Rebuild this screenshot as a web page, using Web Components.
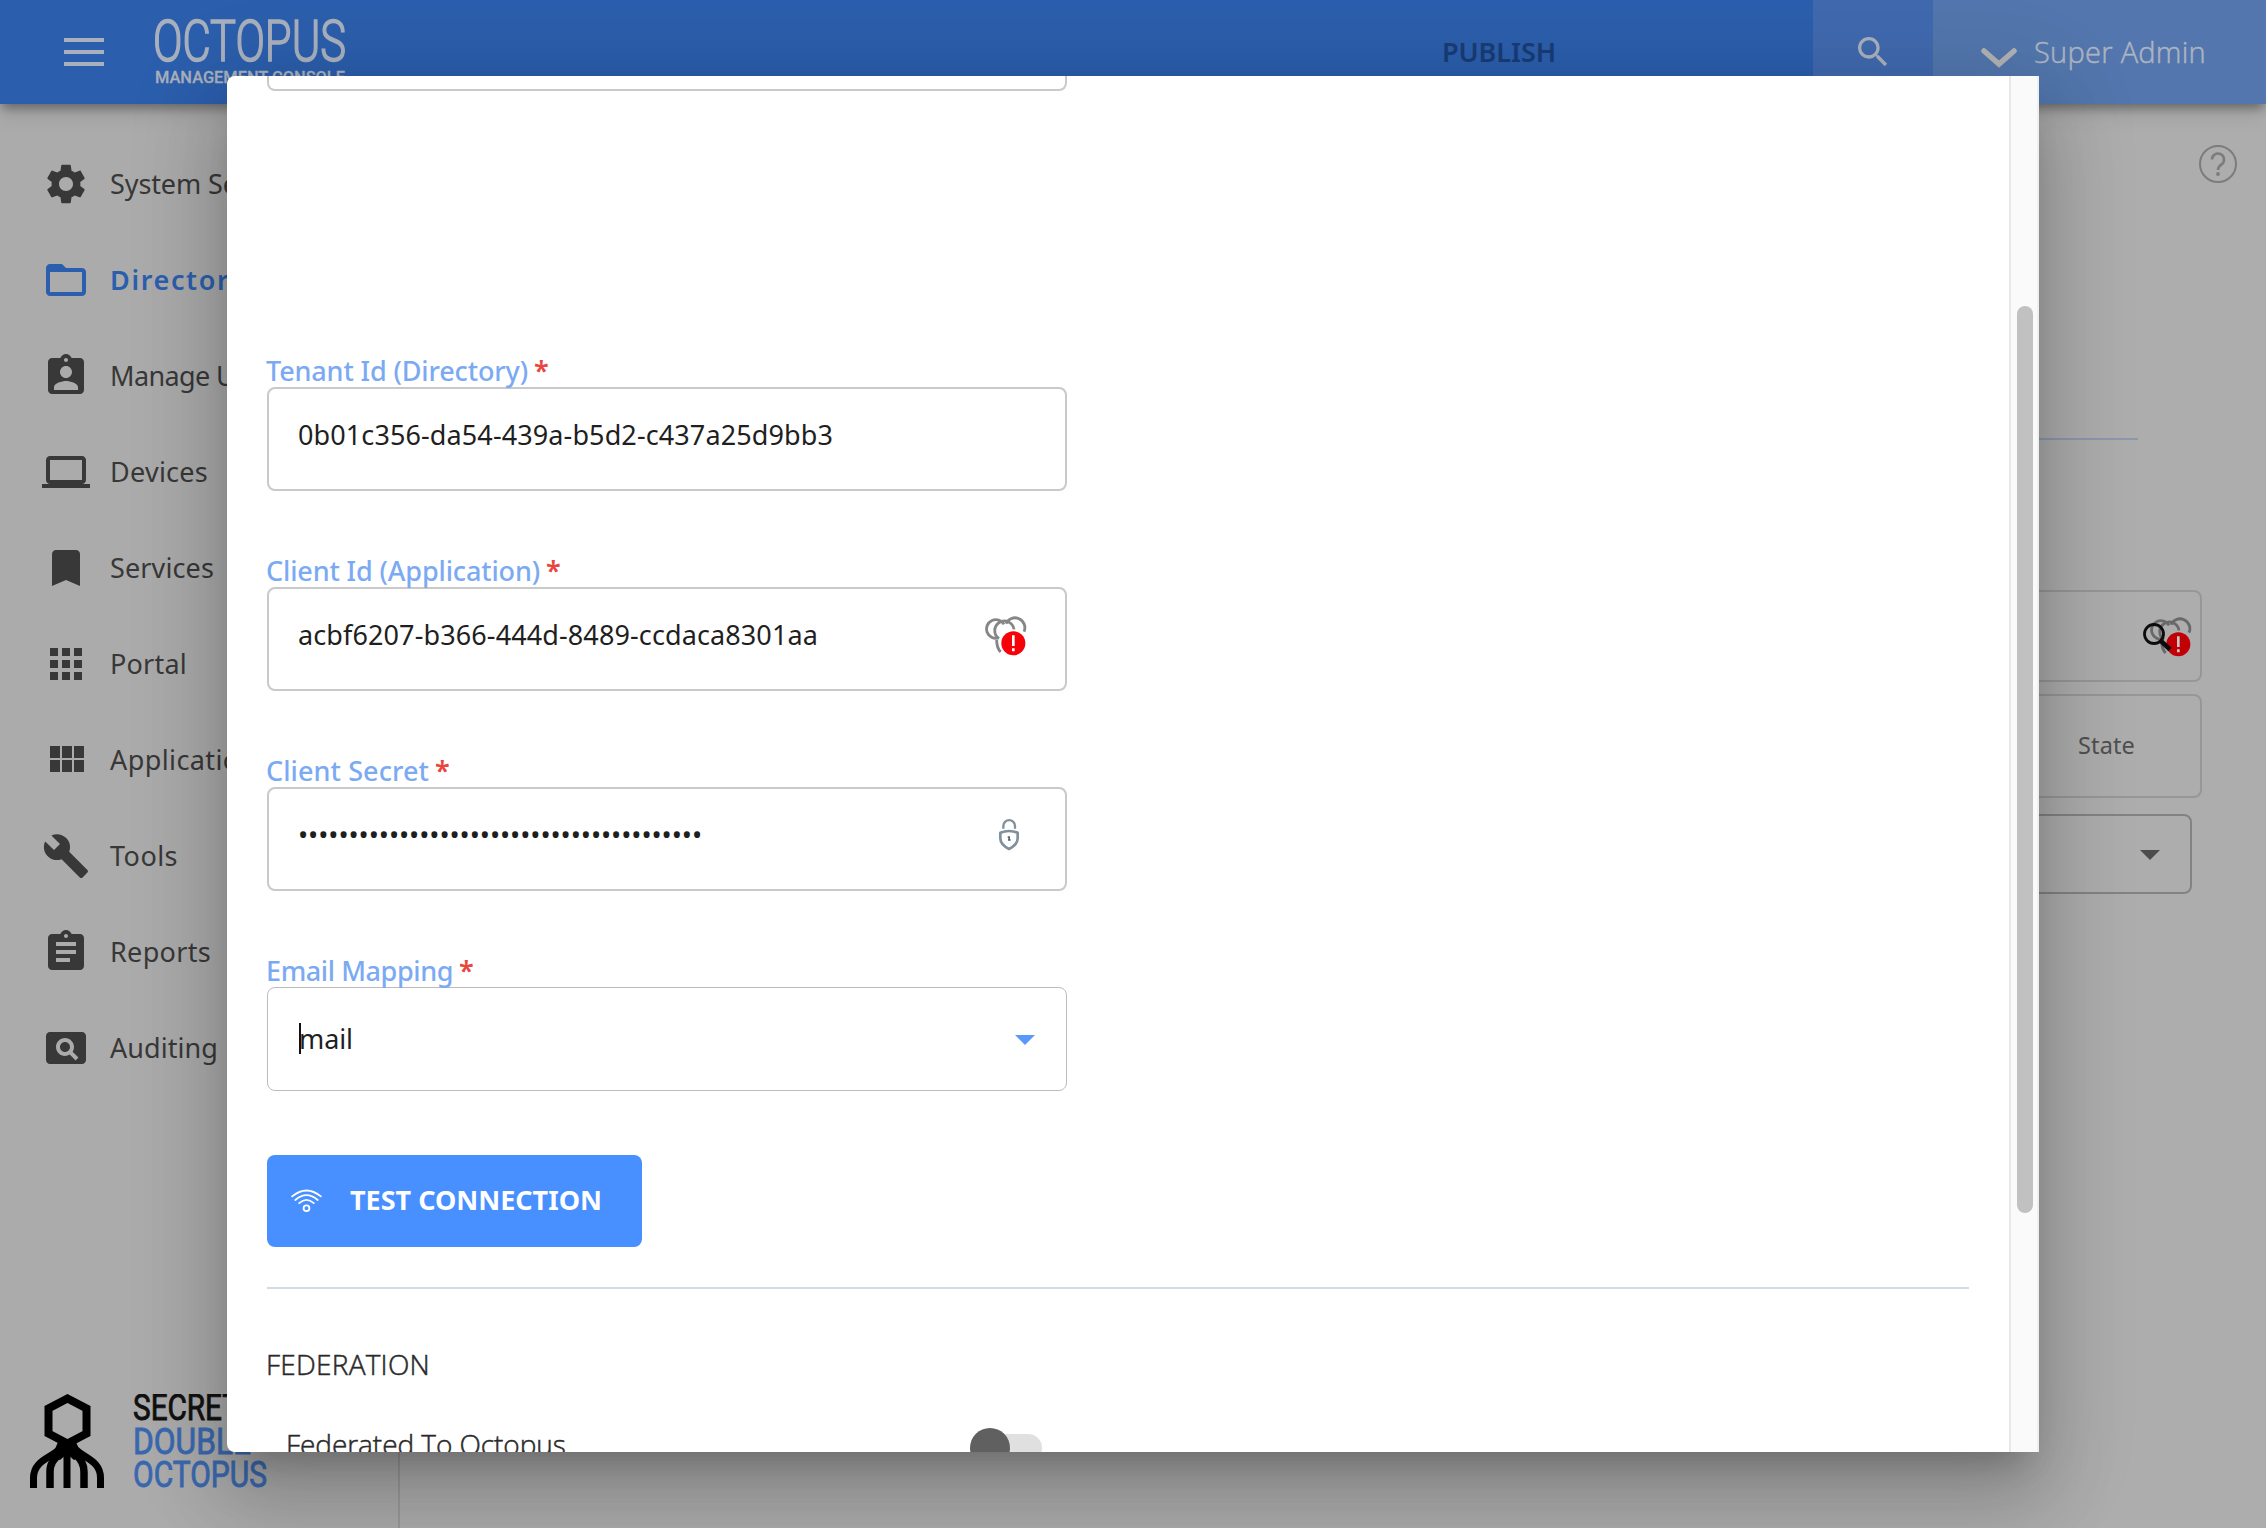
<!DOCTYPE html>
<html lang="en">
<head>
    <meta charset="UTF-8">
    <meta name="viewport" content="width=device-width, initial-scale=1.0">
    <title>Octopus Management Console</title>
    <style>
        html, body {
            margin: 0;
            height: 100%;
            overflow: hidden;
            font-family: "Noto Sans", "Open Sans", sans-serif;
            font-size: 27px;
        }
    </style>
</head>
<body>
    <octo-console>
        <octo-header slot="header"></octo-header>
        <octo-sidebar slot="sidebar">
            <nav-item icon="settings" w="200">System Settings</nav-item>
            <nav-item icon="folder" w="162" active>Directories</nav-item>
            <nav-item icon="badge" w="175">Manage Users</nav-item>
            <nav-item icon="laptop" w="98">Devices</nav-item>
            <nav-item icon="bookmark" w="104">Services</nav-item>
            <nav-item icon="apps" w="77">Portal</nav-item>
            <nav-item icon="module" w="160">Applications</nav-item>
            <nav-item icon="build" w="68">Tools</nav-item>
            <nav-item icon="report" w="101">Reports</nav-item>
            <nav-item icon="pageview" w="108">Auditing</nav-item>
        </octo-sidebar>
        <directory-page slot="main"></directory-page>
        <modal-dialog slot="dialog">
            <form-field label="Tenant Id (Directory)" lw="262">
                <fit-text w="535">0b01c356-da54-439a-b5d2-c437a25d9bb3</fit-text>
            </form-field>
            <form-field label="Client Id (Application)" lw="274">
                <fit-text w="520">acbf6207-b366-444d-8489-ccdaca8301aa</fit-text>
                <octo-icon slot="suffix" name="cluster" style="margin: 2px 38px 0 0"></octo-icon>
            </form-field>
            <form-field label="Client Secret" lw="163">
                <fit-text w="404">••••••••••••••••••••••••••••••••••••••••</fit-text>
                <octo-icon slot="suffix" name="lock" style="margin: -2px 45px 0 0"></octo-icon>
            </form-field>
            <form-field label="Email Mapping" lw="187" select>
                <fit-text w="54">mail</fit-text>
                <octo-icon slot="suffix" name="caret" style="margin-right: 31px; color: #5a98fa"></octo-icon>
            </form-field>
            <action-button slot="actions" w="252">TEST CONNECTION</action-button>
            <toggle-row slot="federation" w="277">Federated To Octopus</toggle-row>
        </modal-dialog>
    </octo-console>

    <script>
    // name: [width, height, viewBox, markup]
    const ICONS = {
        settings: [48, 48, '0 0 24 24', '<path d="M19.14 12.94c.04-.3.06-.61.06-.94 0-.32-.02-.64-.07-.94l2.03-1.58c.18-.14.23-.41.12-.61l-1.92-3.32c-.12-.22-.37-.29-.59-.22l-2.39.96c-.5-.38-1.03-.7-1.62-.94L14.4 2.81c-.04-.24-.24-.41-.48-.41h-3.84c-.24 0-.43.17-.47.41l-.36 2.54c-.59.24-1.13.57-1.62.94l-2.39-.96c-.22-.08-.47 0-.59.22L2.74 8.87c-.12.21-.08.47.12.61l2.03 1.58c-.05.3-.09.63-.09.94s.02.64.07.94l-2.03 1.58c-.18.14-.23.41-.12.61l1.92 3.32c.12.22.37.29.59.22l2.39-.96c.5.38 1.03.7 1.62.94l.36 2.54c.05.24.24.41.48.41h3.84c.24 0 .44-.17.47-.41l.36-2.54c.59-.24 1.13-.56 1.62-.94l2.39.96c.22.08.47 0 .59-.22l1.92-3.32c.12-.22.07-.47-.12-.61l-2.01-1.58zM12 15.5c-1.93 0-3.5-1.57-3.5-3.5s1.57-3.5 3.5-3.5 3.5 1.57 3.5 3.5-1.57 3.5-3.5 3.5z"/>'],
        folder: [48, 48, '0 0 24 24', '<path d="M20 6h-8l-2-2H4c-1.1 0-1.99.9-1.99 2L2 18c0 1.1.9 2 2 2h16c1.1 0 2-.9 2-2V8c0-1.1-.9-2-2-2zm0 12H4V8h16v10z"/>'],
        badge: [48, 48, '0 0 24 24', '<path d="M19 3h-4.18C14.4 1.84 13.3 1 12 1c-1.3 0-2.4.84-2.82 2H5c-1.1 0-2 .9-2 2v14c0 1.1.9 2 2 2h14c1.1 0 2-.9 2-2V5c0-1.1-.9-2-2-2zm-7 0c.55 0 1 .45 1 1s-.45 1-1 1-1-.45-1-1 .45-1 1-1zm0 4c1.66 0 3 1.34 3 3s-1.34 3-3 3-3-1.34-3-3 1.34-3 3-3zm6 12H6v-1.400c0-2 4-3.100 6-3.100s6 1.100 6 3.100V19z"/>'],
        laptop: [48, 48, '0 0 24 24', '<path d="M20 18c1.1 0 1.99-.9 1.99-2L22 6c0-1.1-.9-2-2-2H4c-1.1 0-2 .9-2 2v10c0 1.1.9 2 2 2H0v2h24v-2h-4zM4 6h16v10H4V6z"/>'],
        bookmark: [48, 48, '0 0 24 24', '<path d="M17 3H7c-1.1 0-1.99.9-1.99 2L5 21l7-3 7 3V5c0-1.1-.9-2-2-2z"/>'],
        apps: [48, 48, '0 0 24 24', '<path d="M4 8h4V4H4v4zm6 12h4v-4h-4v4zm-6 0h4v-4H4v4zm0-6h4v-4H4v4zm6 0h4v-4h-4v4zm6-10v4h4V4h-4zm-6 4h4V4h-4v4zm6 6h4v-4h-4v4zm0 6h4v-4h-4v4z"/>'],
        module: [48, 48, '0 0 24 24', '<path d="M4 11h5V5H4v6zm0 7h5v-6H4v6zm6 0h5v-6h-5v6zm6 0h5v-6h-5v6zm-6-7h5V5h-5v6zm6-6v6h5V5h-5z"/>'],
        build: [48, 48, '0 0 24 24', '<path d="M22.7 19l-9.1-9.1c.9-2.3.4-5-1.5-6.9-2-2-5-2.4-7.4-1.3L9 6 6 9 1.6 4.7C.4 7.1.9 10.1 2.9 12.1c1.9 1.9 4.6 2.4 6.9 1.5l9.1 9.1c.4.4 1 .4 1.4 0l2.3-2.3c.5-.4.5-1.1.1-1.4z"/>'],
        report: [48, 48, '0 0 24 24', '<path d="M19 3h-4.18C14.4 1.84 13.3 1 12 1c-1.3 0-2.4.84-2.82 2H5c-1.1 0-2 .9-2 2v14c0 1.1.9 2 2 2h14c1.1 0 2-.9 2-2V5c0-1.1-.9-2-2-2zm-7 0c.55 0 1 .45 1 1s-.45 1-1 1-1-.45-1-1 .45-1 1-1zm2 14H7v-2h7v2zm3-4H7v-2h10v2zm0-4H7V7h10v2z"/>'],
        pageview: [48, 48, '0 0 24 24', '<path d="M11.5 9C10.12 9 9 10.12 9 11.5s1.12 2.5 2.5 2.5 2.5-1.12 2.5-2.5S12.88 9 11.5 9zM20 4H4c-1.1 0-2 .9-2 2v12c0 1.1.9 2 2 2h16c1.1 0 2-.9 2-2V6c0-1.1-.9-2-2-2zm-3.21 14.21l-2.91-2.91c-.69.44-1.51.7-2.39.7C9.01 16 7 13.99 7 11.5S9.01 7 11.5 7 16 9.01 16 11.5c0 .88-.26 1.69-.7 2.39l2.91 2.9-1.42 1.42z"/>'],
        menu: [40, 28, '0 0 40 28', '<path d="M0 0h40v4H0zM0 12h40v4H0zM0 24h40v4H0z"/>'],
        search: [40, 40, '0 0 24 24', '<path d="M15.5 14h-.79l-.28-.27C15.41 12.59 16 11.11 16 9.5 16 5.91 13.09 3 9.5 3S3 5.91 3 9.5 5.91 16 9.5 16c1.61 0 3.09-.59 4.23-1.57l.27.28v.79l5 4.99L20.49 19l-4.99-5zm-6 0C7.01 14 5 11.99 5 9.5S7.01 5 9.5 5 14 7.01 14 9.5 11.99 14 9.5 14z"/>'],
        chevron: [36, 20, '0 0 36 20', '<path d="M3 3l15 13L33 3" fill="none" stroke="currentColor" stroke-width="5.5" stroke-linecap="round"/>'],
        help: [40, 40, '0 0 40 40', '<g fill="none" stroke="currentColor" stroke-width="2"><circle cx="20" cy="20" r="18"/><path d="M14 15.500a6 6 0 1 1 9.500 4.900c-2.300 1.700-3.500 2.700-3.500 5.600" stroke-width="2.600"/></g><circle cx="20" cy="30" r="1.900"/>'],
        // overlapping rings with an alert badge
        cluster: [42, 42, '134 106 126 126', '<g fill="none" stroke="#868686" stroke-width="8.500"><path d="M191 131A28 28 0 1 0 174 172"/><path d="M197 129A29 29 0 0 1 251 153"/><path d="M176 174A29 29 0 1 1 221 146"/><path d="M169 178Q169 202 181 214"/></g><circle cx="219" cy="188" r="36" fill="#f80008"/><path d="M215 164h8v32h-8zM215 203h8v9h-8z" fill="#fff"/>'],
        lock: [22, 34, '174 711 66 102', '<g fill="none" stroke="#80909c"><path d="M190 743v-8a17 17 0 0 1 35 0v8" stroke-width="7"/><path d="M181 755q26-10 52 0v17q0 19-26 32q-26-13-26-32z" stroke-width="8" stroke-linejoin="round"/></g><path d="M203 766h7v9h2v4h-8v-4h1v-5h-2z" fill="#506470"/>'],
        caret: [20, 10, '0 0 20 10', '<path d="M0 0h20L10 10z"/>'],
        wifi: [31, 24, '0 0 32 24', '<g fill="none" stroke="currentColor" stroke-width="1.900" stroke-linecap="round"><path d="M1.200 7.200Q16-5 30.800 7.200M4.500 10.900Q16 1 27.500 10.900M8.500 14.200Q16 7.500 23.500 14.200"/><circle cx="16" cy="19.500" r="3"/></g>'],
        octopus: [74, 94, '0 0 74 94', '<g fill="none" stroke="#000"><path d="M37.500 4.500L56.500 14.500v25L37.500 49.500 18.500 39.500v-25z" stroke-width="8"/><path d="M37 48v46" stroke-width="7"/><path d="M34 52C32 62 20 63 20 78v16M41 52C43 62 54 63 54 78v16" stroke-width="7.500"/><path d="M34 50C26 64 3.500 64 3.500 84v10M41 50C49 64 70.500 64 70.500 84v10" stroke-width="7"/></g><path d="M28 48h18l6 14-8 4-7-6-7 6-8-4z"/>'],
        lens: [32, 32, '0 0 32 32', '<circle cx="12" cy="12" r="9.500" fill="none" stroke="#0c0c0c" stroke-width="2.800"/><path d="M19 19l9 8.500" stroke="#0c0c0c" stroke-width="4.500"/>']
    };

    const define = (name, cls) => customElements.define(name, cls);

    class OctoIcon extends HTMLElement {
        constructor() {
            super();
            this.attachShadow({mode: 'open'});
        }
        connectedCallback() {
            const [w, h, box, body] = ICONS[this.getAttribute('name')];
            this.shadowRoot.innerHTML = `
            <style>
            :host { display: block; flex: none; }
            svg { display: block; fill: currentColor; }
            </style>
            <svg width="${w}" height="${h}" viewBox="${box}">${body}</svg>`;
        }
    }
    define('octo-icon', OctoIcon);

    // One line of text, tracked in or out until it is `w` pixels wide
    class FitText extends HTMLElement {
        constructor() {
            super();
            this.attachShadow({mode: 'open'}).innerHTML = `
            <style>
            :host { display: block; flex: none; white-space: nowrap; }
            span { display: inline-block; }
            </style>
            <span><slot></slot></span>`;
        }
        connectedCallback() {
            const span = this.shadowRoot.querySelector('span');
            const w = parseFloat(this.getAttribute('w'));
            const n = this.textContent.trim().length;
            if (!w || !n) return;
            span.style.letterSpacing = '0px';
            const natural = span.getBoundingClientRect().width;
            span.style.letterSpacing = `${(w - natural) / n}px`;
        }
    }
    define('fit-text', FitText);

    class NavItem extends HTMLElement {
        constructor() {
            super();
            this.attachShadow({mode: 'open'});
        }
        connectedCallback() {
            this.shadowRoot.innerHTML = `
            <style>
            :host { display: flex; align-items: center; gap: 20px; height: 96px; padding-left: 42px; color: #383838; }
            :host([active]) { color: #2b5fae; font-weight: 600; }
            fit-text { margin-bottom: 2px; }
            </style>
            <octo-icon name="${this.getAttribute('icon')}"></octo-icon>
            <fit-text w="${this.getAttribute('w')}">${this.textContent}</fit-text>`;
        }
    }
    define('nav-item', NavItem);

    class OctoHeader extends HTMLElement {
        constructor() {
            super();
            this.attachShadow({mode: 'open'}).innerHTML = `
            <style>
            :host {
                display: flex; height: 104px; position: relative; color: #a9b0bd;
                background: #2b5eac;
                box-shadow: 0 6px 10px -2px rgba(0,0,0,.36), 0 12px 20px 0 rgba(0,0,0,.08);
            }
            .menu { padding: 38px 50px 0 64px; }
            .brand { display: block; }
            .publish { margin-left: auto; padding: 0 257px 0 0; line-height: 103px; font-weight: 600; color: #193c75; }
            .search { width: 120px; background: #4069ae; }
            .search octo-icon { padding: 32px 0 0 40px; }
            .user { display: flex; width: 333px; background: #5276ad; color: #b0b2b4; }
            .user octo-icon { padding: 48px 17px 0 48px; }
            .user fit-text { font: 300 29px/104px "Open Sans", sans-serif; color: #adb4c2; -webkit-text-stroke: .5px #adb4c2; }
            </style>
            <octo-icon class="menu" name="menu"></octo-icon>
            <svg class="brand" width="200" height="104" fill="#a9b0bd">
                <text x="-1" y="61" font-family="Roboto, sans-serif" font-weight="300" font-size="57" stroke="#a9b0bd" stroke-width="1.600" textLength="193" lengthAdjust="spacingAndGlyphs">OCTOPUS</text>
                <text x="1" y="83" font-family="Roboto, sans-serif" font-weight="500" font-size="17" stroke="#a9b0bd" stroke-width=".3" textLength="190" lengthAdjust="spacingAndGlyphs">MANAGEMENT CONSOLE</text>
            </svg>
            <fit-text class="publish" w="114">PUBLISH</fit-text>
            <div class="search"><octo-icon name="search"></octo-icon></div>
            <div class="user"><octo-icon name="chevron"></octo-icon><fit-text w="172">Super Admin</fit-text></div>`;
        }
    }
    define('octo-header', OctoHeader);

    class OctoSidebar extends HTMLElement {
        constructor() {
            super();
            this.attachShadow({mode: 'open'}).innerHTML = `
            <style>
            :host { display: flex; flex-direction: column; box-sizing: border-box; width: 400px; height: 100%; border-right: 2px solid #9a9a9a; background: #ababab; }
            nav { padding-top: 32px; }
            .logo { display: flex; gap: 28px; margin: auto 0 40px 30px; }
            .logo text { stroke-width: .9px; }
            </style>
            <nav><slot></slot></nav>
            <div class="logo">
                <octo-icon name="octopus"></octo-icon>
                <svg width="150" height="94" font-family="Roboto, sans-serif" font-size="36.500">
                    <text x="1" y="26" fill="#111" stroke="#111" textLength="107" lengthAdjust="spacingAndGlyphs">SECRET</text>
                    <text x="1" y="60" fill="#3a68b0" stroke="#3a68b0" textLength="118" lengthAdjust="spacingAndGlyphs">DOUBLE</text>
                    <text x="1" y="93" fill="#3a68b0" stroke="#3a68b0" textLength="134" lengthAdjust="spacingAndGlyphs">OCTOPUS</text>
                </svg>
            </div>`;
        }
    }
    define('octo-sidebar', OctoSidebar);

    class DirectoryPage extends HTMLElement {
        constructor() {
            super();
            this.attachShadow({mode: 'open'}).innerHTML = `
            <style>
            :host { display: flex; flex-direction: column; height: 100%; }
            .help { align-self: flex-end; margin: 40px 28px 0 0; color: #7c7c7c; }
            hr { width: 1600px; height: 2px; margin: 254px 128px 0 auto; border: 0; background: #8b98ae; }
            .row { display: flex; align-items: center; justify-content: flex-end; box-sizing: border-box; width: 1700px; margin: 0 64px 0 auto; border: 2px solid #979797; border-radius: 8px; }
            .filter { height: 92px; margin-top: 150px; padding-right: 8px; }
            .filter octo-icon + octo-icon { margin-left: -24px; }
            .filter .cluster { filter: brightness(.78); margin-top: 3px; }
            .filter .lens { position: relative; z-index: 1; margin-top: 4px; }
            .head { height: 104px; margin-top: 12px; padding-right: 65px; font-size: 23.500px; color: #505050; }
            .head fit-text { margin-bottom: 2px; }
            .pick { height: 80px; width: 1600px; margin: 16px 74px 0 auto; padding: 2px 30px 0 0; border-color: #838383; color: #4c4c4c; }
            </style>
            <octo-icon class="help" name="help"></octo-icon>
            <hr>
            <div class="row filter"><octo-icon class="lens" name="lens"></octo-icon><octo-icon class="cluster" name="cluster"></octo-icon></div>
            <div class="row head"><fit-text w="57">State</fit-text></div>
            <div class="row pick"><octo-icon name="caret"></octo-icon></div>`;
        }
    }
    define('directory-page', DirectoryPage);

    class FormField extends HTMLElement {
        constructor() {
            super();
            this.attachShadow({mode: 'open'});
        }
        connectedCallback() {
            this.shadowRoot.innerHTML = `
            <style>
            :host { display: block; width: 800px; }
            label { display: flex; gap: 6px; height: 36px; margin-left: -1px; line-height: 39px; font-weight: 500; color: #7baaf3; }
            b { color: #e8453c; font-weight: 600; }
            .box { display: flex; justify-content: space-between; box-sizing: border-box; height: 104px; padding-left: 29px; border: 2px solid #c9c9c9; border-radius: 8px; line-height: 91px; color: #1f1f1f; }
            .box div { display: flex; align-items: center; margin-top: -6px; }
            :host([select]) .box { border-width: 1px; border-color: #bcbcbc; padding-left: 31px; line-height: 101px; }
            :host([select]) .box div { margin-top: 2px; }
            i { display: none; width: 2px; height: 31px; margin: 35px -2px 0 0; background: #111; }
            :host([select]) i { display: block; }
            .value { display: flex; }
            </style>
            <label><fit-text w="${this.getAttribute('lw')}">${this.getAttribute('label')}</fit-text><b>*</b></label>
            <div class="box">
                <span class="value"><i></i><slot></slot></span>
                <div><slot name="suffix"></slot></div>
            </div>`;
        }
    }
    define('form-field', FormField);

    class ActionButton extends HTMLElement {
        constructor() {
            super();
            this.attachShadow({mode: 'open'});
        }
        connectedCallback() {
            this.shadowRoot.innerHTML = `
            <style>
            :host { display: block; }
            button { display: flex; align-items: center; gap: 28px; width: 375px; height: 92px; padding: 0 0 0 24px; border: 0; border-radius: 8px; background: #488fff; color: #fff; font: inherit; font-weight: 700; }
            fit-text { margin-bottom: 3px; }
            </style>
            <button><octo-icon name="wifi"></octo-icon><fit-text w="${this.getAttribute('w')}">${this.textContent}</fit-text></button>`;
        }
    }
    define('action-button', ActionButton);

    class ToggleRow extends HTMLElement {
        constructor() {
            super();
            this.attachShadow({mode: 'open'});
        }
        connectedCallback() {
            this.shadowRoot.innerHTML = `
            <style>
            :host { display: flex; align-items: flex-start; width: 756px; height: 40px; padding-left: 19px; justify-content: space-between; }
            .track { width: 62px; height: 28px; margin-top: 10px; border-radius: 14px; background: #e0e0e0; }
            .knob { width: 40px; height: 40px; margin: -6px 0 0 -10px; border-radius: 50%; background: #606060; }
            </style>
            <fit-text w="${this.getAttribute('w')}">${this.textContent}</fit-text>
            <div class="track"><div class="knob"></div></div>`;
        }
    }
    define('toggle-row', ToggleRow);

    class ModalDialog extends HTMLElement {
        constructor() {
            super();
            this.attachShadow({mode: 'open'}).innerHTML = `
            <style>
            :host {
                display: flex; width: 1812px; height: 1376px; overflow: hidden;
                border-radius: 8px 0 0 8px; background: #fff;
                box-shadow: 0 22px 30px -14px rgba(0,0,0,.2), 0 48px 76px 6px rgba(0,0,0,.14), 0 18px 92px 16px rgba(0,0,0,.12);
            }
            .content { flex: 1; height: 1376px; padding: 0 40px; overflow: hidden; }
            .cut { box-sizing: border-box; width: 800px; height: 15px; border: 2px solid #c9c9c9; border-top: 0; border-radius: 0 0 8px 8px; }
            .fields { display: flex; flex-direction: column; gap: 60px; margin: 260px 0 64px; }
            hr { height: 2px; margin: 40px 0 55px; border: 0; background: #d0dbe8; }
            h3 { margin: 0 0 40px -1px; font: 300 28px/40px "Open Sans", sans-serif; color: #2a2a2a; -webkit-text-stroke: .5px #2a2a2a; }
            ::slotted(toggle-row) { font: 300 28px/40px "Open Sans", sans-serif; color: #2a2a2a; -webkit-text-stroke: .5px #2a2a2a; }
            .scroll { box-sizing: border-box; width: 30px; padding: 230px 0 0 6px; border-left: 2px solid #e8e8e8; border-right: 2px solid #efefef; background: #fafafa; }
            .thumb { width: 16px; height: 907px; border-radius: 8px; background: #c1c1c1; }
            </style>
            <div class="content">
                <div class="cut"></div>
                <div class="fields"><slot></slot></div>
                <slot name="actions"></slot>
                <hr>
                <h3><fit-text w="164">FEDERATION</fit-text></h3>
                <slot name="federation"></slot>
            </div>
            <div class="scroll"><div class="thumb"></div></div>`;
        }
    }
    define('modal-dialog', ModalDialog);

    class OctoConsole extends HTMLElement {
        constructor() {
            super();
            this.attachShadow({mode: 'open'}).innerHTML = `
            <style>
            :host { display: flex; flex-direction: column; position: relative; width: 2266px; height: 1528px; overflow: hidden; background: #adadad; }
            .head { position: relative; z-index: 1; }
            .body { display: flex; flex: 1; min-height: 0; }
            main { flex: 1; }
            .overlay { position: absolute; inset: 0; z-index: 2; display: flex; align-items: center; justify-content: center; }
            </style>
            <div class="head"><slot name="header"></slot></div>
            <div class="body">
                <slot name="sidebar"></slot>
                <main><slot name="main"></slot></main>
            </div>
            <div class="overlay"><slot name="dialog"></slot></div>`;
        }
    }
    define('octo-console', OctoConsole);
    </script>
</body>
</html>
